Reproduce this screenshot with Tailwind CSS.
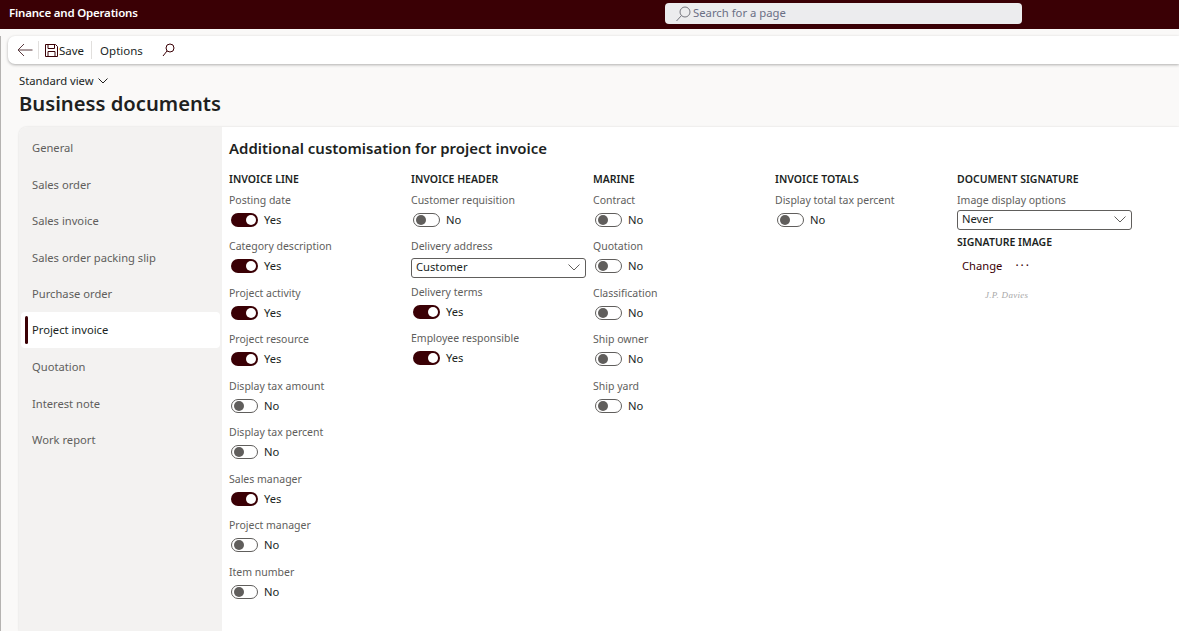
<!DOCTYPE html>
<html lang="en">
<head>
<meta charset="utf-8">
<title>Business documents</title>
<script src="https://cdn.jsdelivr.net/npm/@tailwindcss/browser@4"></script>
</head>
<body class="h-[631px] w-[1179px] overflow-hidden bg-[#faf9f8] font-['Noto_Sans',sans-serif] text-[11.2px] text-[#201f1e]">
<header class="flex h-[29px] items-center bg-[#3a0005] pb-[3px] pl-[9px]">
  <div class="w-[656px] text-[11.500px] font-semibold tracking-[-0.2px] text-white">Finance and Operations</div>
  <div class="flex h-[21px] w-[357px] items-center gap-[1px] rounded-[4px] bg-[#ececee] pl-[10px] text-[11.300px] text-[#6b6f85]">
    <svg width="17" height="17" viewBox="0 0 17 17" fill="none" stroke="#77777f" stroke-width="1"><circle cx="10" cy="7" r="5"/><path d="M6.500 10.500L1.500 16"/></svg>
    <span class="pt-[1px]">Search for a page</span>
  </div>
</header>
<div class="h-[602px] border-l border-[#b5b3b1]">
  <div class="ml-[7px] mt-[7px] flex h-[28px] items-center rounded-l-[7px] bg-white pl-[9px] shadow-[0_1px_3px_rgba(0,0,0,0.3)]">
    <svg width="16" height="14" viewBox="0 0 16 14" fill="none" stroke="#5a3a3e" stroke-width="1"><path d="M15.500 7H1M7 1L1 7l6 6"/></svg>
    <div class="ml-[5px] h-[18px] w-px bg-[#e1dfdd]"></div>
    <svg class="ml-[6px]" width="13" height="13" viewBox="0 0 13 13" fill="none" stroke="#3a0005" stroke-width="1"><path d="M.5.5h10l2 2v10H.5zM3 .5v4h6.500v-4M3 12.500V7.500h7v5"/></svg>
    <span class="ml-[1px] pt-[1px] text-[11.500px]">Save</span>
    <div class="ml-[7px] h-[18px] w-px bg-[#e1dfdd]"></div>
    <span class="ml-[8px] pt-[1px] text-[11.500px]">Options</span>
    <svg class="ml-[19px]" width="13" height="14" viewBox="0 0 13 14" fill="none" stroke="#3a0005" stroke-width="1"><circle cx="8" cy="5" r="4"/><path d="M5 8l-4 5"/></svg>
  </div>
  <div class="ml-[18px] mt-[9px] flex h-[16px] items-center gap-[4px] text-[11.250px]">
    <span>Standard view</span>
    <svg width="10" height="6" viewBox="0 0 10 6" fill="none" stroke="#201f1e" stroke-width="1"><path d="M.5.5L5 5 9.500.5"/></svg>
  </div>
  <h1 class="ml-[18px] mt-[1px] h-[27px] text-[20.200px] leading-[27px] font-semibold">Business documents</h1>
  <main class="ml-[18px] mt-[10px] flex h-[504px] rounded-tl-[8px] bg-white shadow-[0_0_2px_rgba(0,0,0,0.15)]">
    <nav class="flex w-[203px] shrink-0 flex-col rounded-tl-[8px] bg-[#f3f2f1] pt-[3.250px] pl-[2px] pr-[2px] text-[#605e5c]">
      <div class="flex h-[36.500px] items-center pl-[11px]">General</div>
      <div class="flex h-[36.500px] items-center pl-[11px]">Sales order</div>
      <div class="flex h-[36.500px] items-center pl-[11px]">Sales invoice</div>
      <div class="flex h-[36.500px] items-center pl-[11px]">Sales order packing slip</div>
      <div class="flex h-[36.500px] items-center pl-[11px]">Purchase order</div>
      <div class="relative -mt-[0.750px] mb-[1.250px] flex h-[36px] items-center rounded-[4px] bg-white pl-[11px] text-[#201f1e]">
        <span class="absolute left-[4px] top-[4px] h-[28px] w-[3px] rounded-[2px] bg-[#3a0005]"></span>Project invoice
      </div>
      <div class="flex h-[36.500px] items-center pl-[11px]">Quotation</div>
      <div class="flex h-[36.500px] items-center pl-[11px]">Interest note</div>
      <div class="flex h-[36.500px] items-center pl-[11px]">Work report</div>
    </nav>
    <section class="min-w-0 flex-1 pl-[7px]">
      <h2 class="mt-[9px] h-[24px] text-[14.950px] leading-[24px] font-semibold">Additional customisation for project invoice</h2>
      <div class="mt-[10.750px] grid grid-cols-[182px_182px_182px_182px_182px]">
        <div>
          <h3 class="h-[17px] text-[10.500px] leading-[17px] font-semibold">INVOICE LINE</h3>
          <div class="h-[46.500px] pt-[4px]"><div class="h-[17px] text-[10.500px] leading-[17px] text-[#605e5c]">Posting date</div><div class="ml-[2px] mt-[3px] flex h-[16px] items-center gap-[6px]"><span class="flex h-[14px] w-[27px] items-center justify-end rounded-full bg-[#3a0005] pr-[2px]"><span class="size-[10px] rounded-full bg-white"></span></span><span class="pt-[1px]">Yes</span></div></div>
          <div class="h-[46.500px] pt-[4px]"><div class="h-[17px] text-[10.500px] leading-[17px] text-[#605e5c]">Category description</div><div class="ml-[2px] mt-[3px] flex h-[16px] items-center gap-[6px]"><span class="flex h-[14px] w-[27px] items-center justify-end rounded-full bg-[#3a0005] pr-[2px]"><span class="size-[10px] rounded-full bg-white"></span></span><span class="pt-[1px]">Yes</span></div></div>
          <div class="h-[46.500px] pt-[4px]"><div class="h-[17px] text-[10.500px] leading-[17px] text-[#605e5c]">Project activity</div><div class="ml-[2px] mt-[3px] flex h-[16px] items-center gap-[6px]"><span class="flex h-[14px] w-[27px] items-center justify-end rounded-full bg-[#3a0005] pr-[2px]"><span class="size-[10px] rounded-full bg-white"></span></span><span class="pt-[1px]">Yes</span></div></div>
          <div class="h-[46.500px] pt-[4px]"><div class="h-[17px] text-[10.500px] leading-[17px] text-[#605e5c]">Project resource</div><div class="ml-[2px] mt-[3px] flex h-[16px] items-center gap-[6px]"><span class="flex h-[14px] w-[27px] items-center justify-end rounded-full bg-[#3a0005] pr-[2px]"><span class="size-[10px] rounded-full bg-white"></span></span><span class="pt-[1px]">Yes</span></div></div>
          <div class="h-[46.500px] pt-[4px]"><div class="h-[17px] text-[10.500px] leading-[17px] text-[#605e5c]">Display tax amount</div><div class="ml-[2px] mt-[3px] flex h-[16px] items-center gap-[6px]"><span class="flex h-[14px] w-[27px] items-center rounded-full border border-[#605e5c] bg-white pl-[2px]"><span class="size-[10px] rounded-full bg-[#605e5c]"></span></span><span class="pt-[1px]">No</span></div></div>
          <div class="h-[46.500px] pt-[4px]"><div class="h-[17px] text-[10.500px] leading-[17px] text-[#605e5c]">Display tax percent</div><div class="ml-[2px] mt-[3px] flex h-[16px] items-center gap-[6px]"><span class="flex h-[14px] w-[27px] items-center rounded-full border border-[#605e5c] bg-white pl-[2px]"><span class="size-[10px] rounded-full bg-[#605e5c]"></span></span><span class="pt-[1px]">No</span></div></div>
          <div class="h-[46.500px] pt-[4px]"><div class="h-[17px] text-[10.500px] leading-[17px] text-[#605e5c]">Sales manager</div><div class="ml-[2px] mt-[3px] flex h-[16px] items-center gap-[6px]"><span class="flex h-[14px] w-[27px] items-center justify-end rounded-full bg-[#3a0005] pr-[2px]"><span class="size-[10px] rounded-full bg-white"></span></span><span class="pt-[1px]">Yes</span></div></div>
          <div class="h-[46.500px] pt-[4px]"><div class="h-[17px] text-[10.500px] leading-[17px] text-[#605e5c]">Project manager</div><div class="ml-[2px] mt-[3px] flex h-[16px] items-center gap-[6px]"><span class="flex h-[14px] w-[27px] items-center rounded-full border border-[#605e5c] bg-white pl-[2px]"><span class="size-[10px] rounded-full bg-[#605e5c]"></span></span><span class="pt-[1px]">No</span></div></div>
          <div class="h-[46.500px] pt-[4px]"><div class="h-[17px] text-[10.500px] leading-[17px] text-[#605e5c]">Item number</div><div class="ml-[2px] mt-[3px] flex h-[16px] items-center gap-[6px]"><span class="flex h-[14px] w-[27px] items-center rounded-full border border-[#605e5c] bg-white pl-[2px]"><span class="size-[10px] rounded-full bg-[#605e5c]"></span></span><span class="pt-[1px]">No</span></div></div>
        </div>
        <div>
          <h3 class="h-[17px] text-[10.500px] leading-[17px] font-semibold">INVOICE HEADER</h3>
          <div class="h-[46.500px] pt-[4px]"><div class="h-[17px] text-[10.500px] leading-[17px] text-[#605e5c]">Customer requisition</div><div class="ml-[2px] mt-[3px] flex h-[16px] items-center gap-[6px]"><span class="flex h-[14px] w-[27px] items-center rounded-full border border-[#605e5c] bg-white pl-[2px]"><span class="size-[10px] rounded-full bg-[#605e5c]"></span></span><span class="pt-[1px]">No</span></div></div>
          <div class="h-[46px] pt-[4px]"><div class="h-[17px] text-[10.500px] leading-[17px] text-[#605e5c]">Delivery address</div><div class="mt-[2.250px] flex h-[20px] w-[175px] items-center justify-between rounded-[3px] border border-[#605e5c] bg-white pl-[4px] pr-[5px]">Customer<svg width="12" height="7" viewBox="0 0 12 7" fill="none" stroke="#605e5c" stroke-width="1"><path d="M.5.5L6 6 11.500.5"/></svg></div></div>
          <div class="h-[46px] pt-[4px]"><div class="h-[17px] text-[10.500px] leading-[17px] text-[#605e5c]">Delivery terms</div><div class="ml-[2px] mt-[3px] flex h-[16px] items-center gap-[6px]"><span class="flex h-[14px] w-[27px] items-center justify-end rounded-full bg-[#3a0005] pr-[2px]"><span class="size-[10px] rounded-full bg-white"></span></span><span class="pt-[1px]">Yes</span></div></div>
          <div class="h-[46.500px] pt-[4px]"><div class="h-[17px] text-[10.500px] leading-[17px] text-[#605e5c]">Employee responsible</div><div class="ml-[2px] mt-[3px] flex h-[16px] items-center gap-[6px]"><span class="flex h-[14px] w-[27px] items-center justify-end rounded-full bg-[#3a0005] pr-[2px]"><span class="size-[10px] rounded-full bg-white"></span></span><span class="pt-[1px]">Yes</span></div></div>
        </div>
        <div>
          <h3 class="h-[17px] text-[10.500px] leading-[17px] font-semibold">MARINE</h3>
          <div class="h-[46.500px] pt-[4px]"><div class="h-[17px] text-[10.500px] leading-[17px] text-[#605e5c]">Contract</div><div class="ml-[2px] mt-[3px] flex h-[16px] items-center gap-[6px]"><span class="flex h-[14px] w-[27px] items-center rounded-full border border-[#605e5c] bg-white pl-[2px]"><span class="size-[10px] rounded-full bg-[#605e5c]"></span></span><span class="pt-[1px]">No</span></div></div>
          <div class="h-[46.500px] pt-[4px]"><div class="h-[17px] text-[10.500px] leading-[17px] text-[#605e5c]">Quotation</div><div class="ml-[2px] mt-[3px] flex h-[16px] items-center gap-[6px]"><span class="flex h-[14px] w-[27px] items-center rounded-full border border-[#605e5c] bg-white pl-[2px]"><span class="size-[10px] rounded-full bg-[#605e5c]"></span></span><span class="pt-[1px]">No</span></div></div>
          <div class="h-[46.500px] pt-[4px]"><div class="h-[17px] text-[10.500px] leading-[17px] text-[#605e5c]">Classification</div><div class="ml-[2px] mt-[3px] flex h-[16px] items-center gap-[6px]"><span class="flex h-[14px] w-[27px] items-center rounded-full border border-[#605e5c] bg-white pl-[2px]"><span class="size-[10px] rounded-full bg-[#605e5c]"></span></span><span class="pt-[1px]">No</span></div></div>
          <div class="h-[46.500px] pt-[4px]"><div class="h-[17px] text-[10.500px] leading-[17px] text-[#605e5c]">Ship owner</div><div class="ml-[2px] mt-[3px] flex h-[16px] items-center gap-[6px]"><span class="flex h-[14px] w-[27px] items-center rounded-full border border-[#605e5c] bg-white pl-[2px]"><span class="size-[10px] rounded-full bg-[#605e5c]"></span></span><span class="pt-[1px]">No</span></div></div>
          <div class="h-[46.500px] pt-[4px]"><div class="h-[17px] text-[10.500px] leading-[17px] text-[#605e5c]">Ship yard</div><div class="ml-[2px] mt-[3px] flex h-[16px] items-center gap-[6px]"><span class="flex h-[14px] w-[27px] items-center rounded-full border border-[#605e5c] bg-white pl-[2px]"><span class="size-[10px] rounded-full bg-[#605e5c]"></span></span><span class="pt-[1px]">No</span></div></div>
        </div>
        <div>
          <h3 class="h-[17px] text-[10.500px] leading-[17px] font-semibold">INVOICE TOTALS</h3>
          <div class="h-[46.500px] pt-[4px]"><div class="h-[17px] text-[10.500px] leading-[17px] text-[#605e5c]">Display total tax percent</div><div class="ml-[2px] mt-[3px] flex h-[16px] items-center gap-[6px]"><span class="flex h-[14px] w-[27px] items-center rounded-full border border-[#605e5c] bg-white pl-[2px]"><span class="size-[10px] rounded-full bg-[#605e5c]"></span></span><span class="pt-[1px]">No</span></div></div>
        </div>
        <div>
          <h3 class="h-[17px] text-[10.500px] leading-[17px] font-semibold">DOCUMENT SIGNATURE</h3>
          <div class="pt-[4px]"><div class="h-[17px] text-[10.500px] leading-[17px] text-[#605e5c]">Image display options</div><div class="mt-[1px] flex h-[20px] w-[175px] items-center justify-between rounded-[3px] border border-[#605e5c] bg-white pl-[4px] pr-[5px]">Never<svg width="12" height="7" viewBox="0 0 12 7" fill="none" stroke="#605e5c" stroke-width="1"><path d="M.5.5L6 6 11.500.5"/></svg></div></div>
          <h3 class="mt-[4px] h-[17px] text-[10.500px] leading-[17px] font-semibold">SIGNATURE IMAGE</h3>
          <div class="mt-[7px] flex h-[17px] items-center pl-[5px] text-[#3a0005]"><span>Change</span><span class="ml-[13px] text-[12px] tracking-[2px]">···</span></div>
          <div class="ml-[28px] mt-[14px] font-['Liberation_Serif',serif] text-[9px] italic tracking-[0.3px] text-[#a8a8a8]">J.P. Davies</div>
        </div>
      </div>
    </section>
  </main>
</div>
</body>
</html>
